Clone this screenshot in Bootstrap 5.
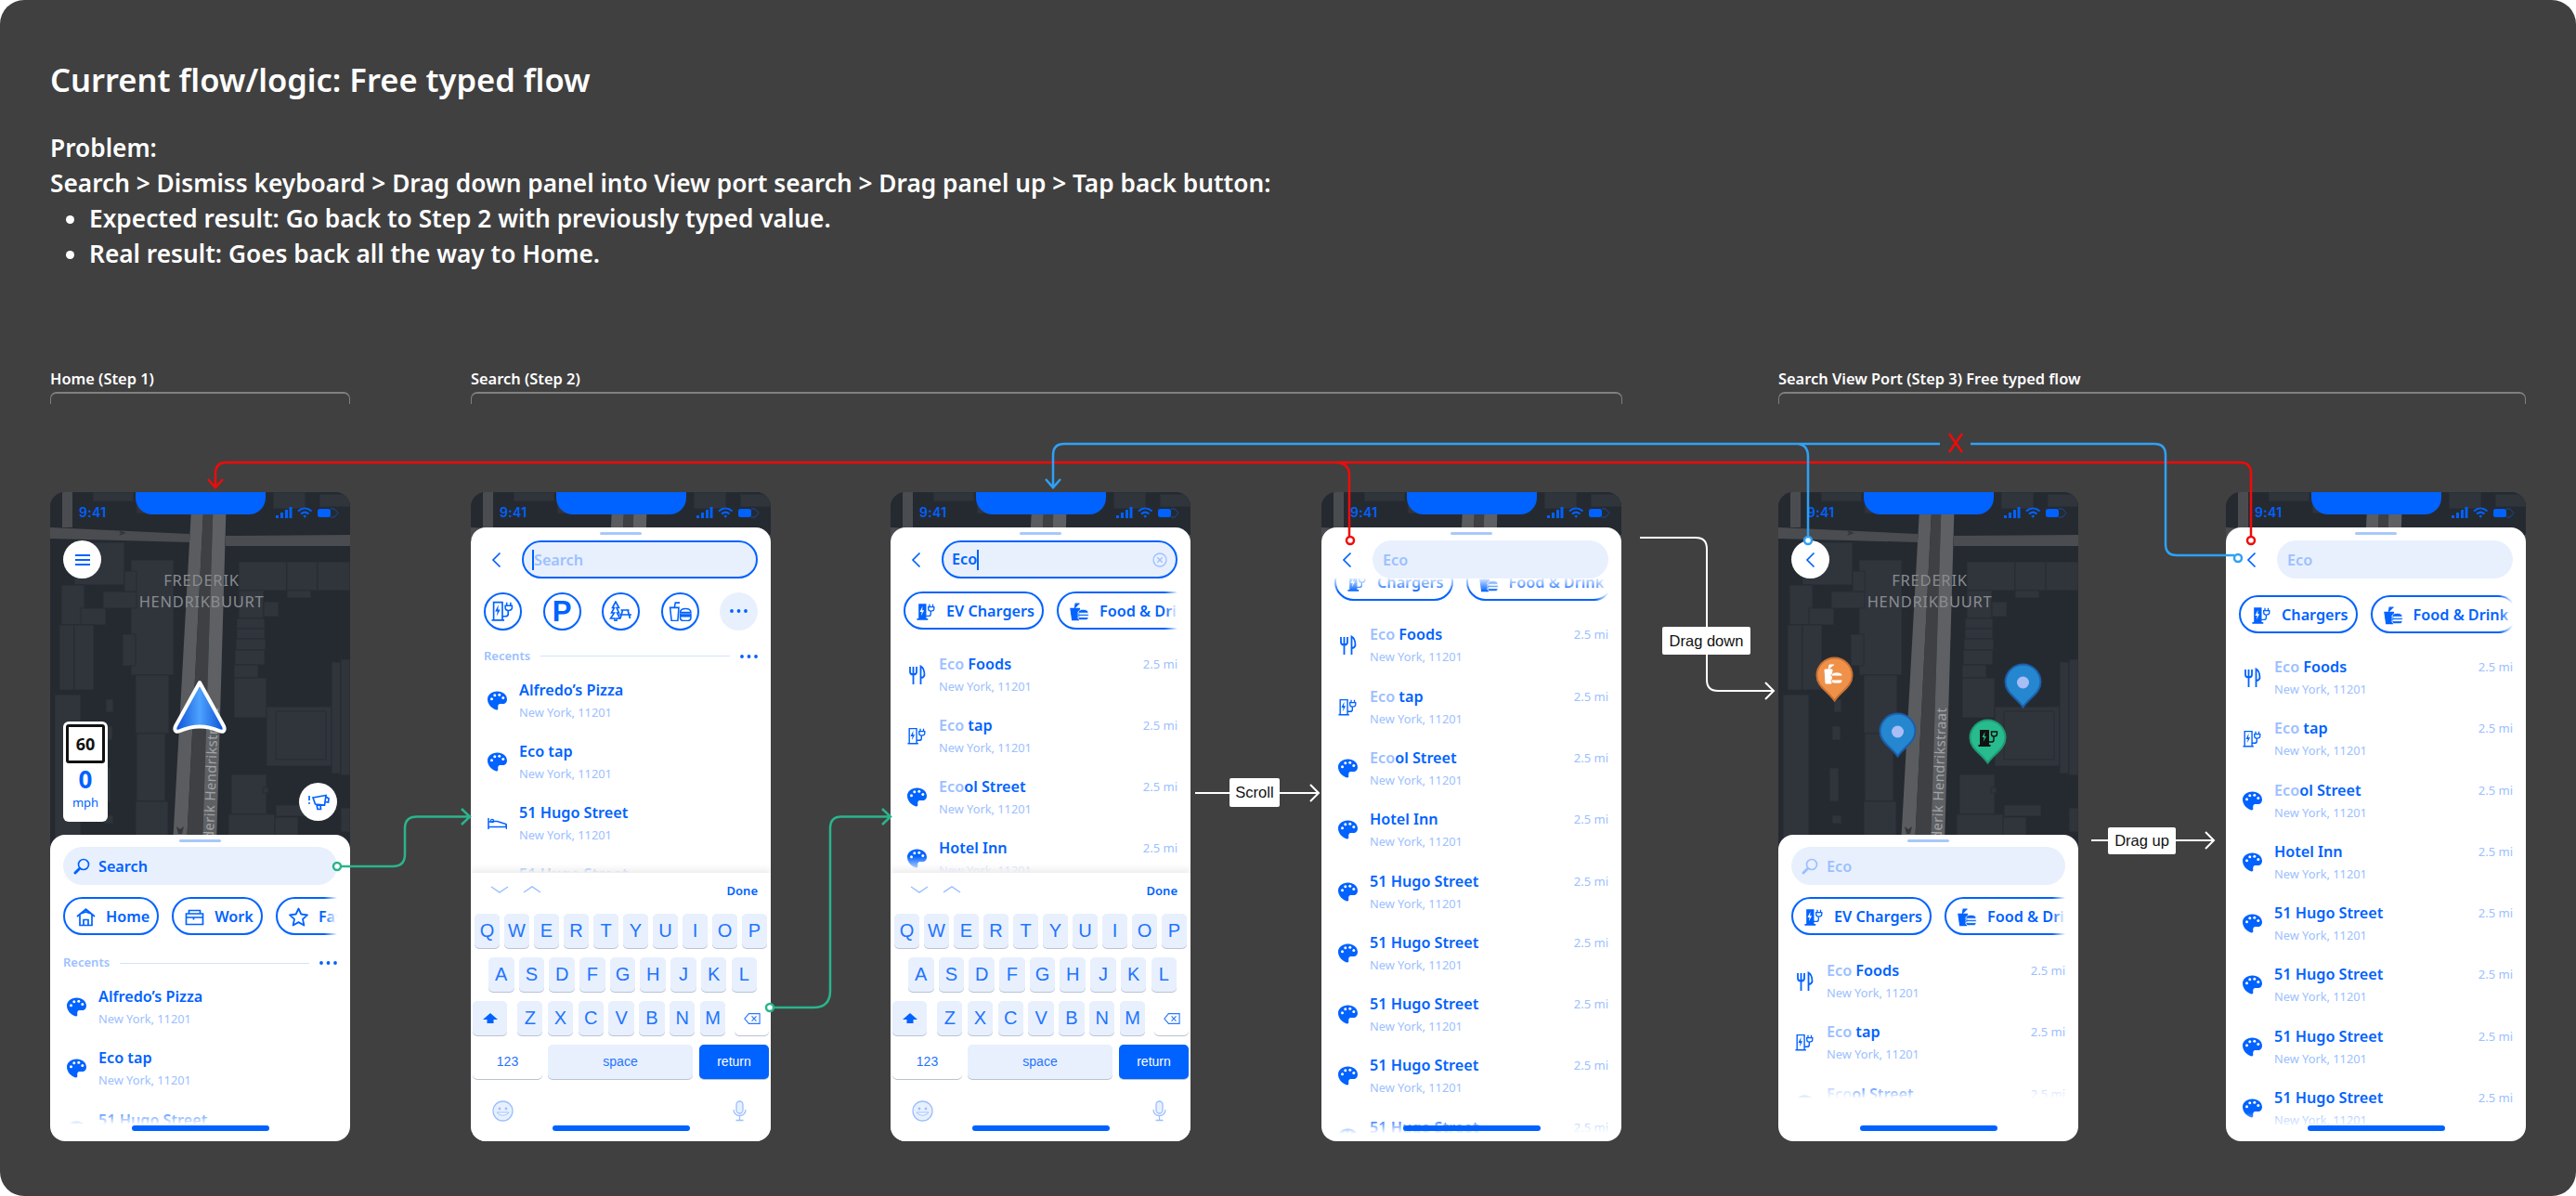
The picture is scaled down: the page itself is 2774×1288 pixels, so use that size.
<!doctype html>
<html lang="en">
<head>
<meta charset="utf-8">
<title>Free typed flow</title>
<link rel="stylesheet" href="https://cdn.jsdelivr.net/npm/bootstrap@5.3.0/dist/css/bootstrap.min.css">
<style>
html,body{margin:0;background:#fff}
.pg{width:2774px;height:1288px;background:#404040;border-radius:26px;position:relative;overflow:hidden;padding:64px 0 0 54px;font-family:"Noto Sans","Open Sans",sans-serif;color:#fff}
.ttl{font-size:34.500px;font-weight:600;line-height:44px;margin:0 0 32px}
.prob{font-size:26.250px;font-weight:600;line-height:38px}
.prob ul{margin:0;padding-left:42px}
.brks{margin-top:106px}
.brk-l{font-size:16.400px;font-weight:600;line-height:20px;margin-bottom:4px}
.brk-b{height:13px;border:solid #808080;border-width:2px 1px 0;border-radius:7px 7px 0 0}
.b1{width:323px}.b2{width:1240px;margin-left:130px}.b3{width:805px;margin-left:168px}
.phs{margin-top:95px}
.ph{width:323px;height:699px;border-radius:16px;overflow:hidden;position:relative;flex:none;background:#252a31}
.m2{margin-left:130px}.m3{margin-left:129px}.m4{margin-left:141px}.m5{margin-left:169px}.m6{margin-left:159px}
.mp{position:absolute;left:0;top:0;width:323px;height:380px}
.ntc{position:absolute;left:92px;top:0;width:140px;height:24px;background:#0062ff;border-radius:0 0 18px 18px}
.tm{position:absolute;left:31px;top:13px;font:600 14px/18px Inter,sans-serif;color:#0062ff;letter-spacing:.3px}
.stt{position:absolute;left:242px;top:15px;width:70px;height:14px}
.rnd{position:absolute;width:41px;height:41px;border-radius:50%;background:#fff}
.r-tl{left:14px;top:52px}.r-rp{left:268px;top:313px}
.r-tl .cb{width:11px;height:18px}
.spd{position:absolute;left:14px;top:247px;width:48px;height:108px;border-radius:6px;background:#fff;text-align:center;color:#0062ff}
.sgn{margin:3px;height:42px;border:3px solid #111;border-radius:3px;font:700 18px/36px "Noto Sans",sans-serif;color:#111}
.spv{font:700 26px/30px "Noto Sans",sans-serif;margin-top:-1px}
.spu{font:400 13px/16px "Noto Sans",sans-serif;margin-top:2px}
.nav-a{position:absolute;left:131px;top:201px;width:60px;height:62px}
.pin{position:absolute;width:41px;height:49px}
.p1{left:40px;top:177px}.p2{left:108px;top:237px}.p3{left:243px;top:184px}.p4{left:205px;top:244px}
.pn{background:#fff;border-radius:16px 16px 0 0;position:relative;padding:0 14px;color:#0062ff;flex:none}
.pn>*{flex-shrink:0}
.lo{height:330px}.hi{height:661px}
.hd{width:45px;height:3px;border-radius:2px;background:#a8c8fb;margin:5px auto 5px}
.hi .hd{margin-bottom:6px}
.srch{height:41px;border-radius:21px;background:#e8f0fe;font-size:16.200px;font-weight:600;line-height:43px;padding:0 11px;white-space:nowrap}
.srch.on{border:2px solid #0062ff;line-height:39px;padding:0 9px}
.srch svg{width:18px;height:18px;margin-right:9px;vertical-align:-3px}
.bk{width:41px;height:41px;flex:none}
.bk svg{width:11px;height:18px;margin-left:8px}
.lt{color:#9cc0ff}
.crt{display:inline-block;width:2px;height:22px;background:#0062ff;vertical-align:-5px}
.crt.mid{vertical-align:0}
.srch .clr{width:16px;height:16px;margin:0 0 0 auto}
.chps{height:41px;gap:14px;overflow:hidden;position:relative;margin-top:13px}
.chps::after{content:"";position:absolute;right:0;top:0;bottom:0;width:14px;background:linear-gradient(90deg,rgba(255,255,255,0),#fff)}
.chp{height:41px;border:2px solid #0062ff;border-radius:21px;padding:0 8px 0 12px;flex:none;font-size:16.200px;font-weight:600;line-height:39px;white-space:nowrap;box-shadow:0 0 3px rgba(0,60,160,.12)}
.chp svg{width:21px;height:21px;margin-right:11px;vertical-align:-5px}
.hi .chps{margin-top:14px}
.chclip{height:24px;overflow:hidden;position:relative}
.chclip::before{content:"";position:absolute;left:0;right:0;top:0;height:14px;background:linear-gradient(rgba(255,255,255,.85),rgba(255,255,255,0));z-index:2}
.hi .chclip .chps{margin-top:-17px}
.hi .chps.low{margin-top:18px}
.cc{width:41px;height:41px;border-radius:50%;border:2px solid #0062ff;flex:none;box-shadow:0 0 3px rgba(0,60,160,.12)}
.cc svg{width:25px;height:22px}
.cc.fl{background:#e8f0fe;border:0;box-shadow:none}
.cc.fl svg{width:19px;height:4px}
.pp{font:700 31px/1 "Liberation Sans",sans-serif}
.cg{gap:22.5px;margin-top:14.5px}
.rec{height:24px;margin-top:16px;gap:11px;font-size:13px;font-weight:600}
.lo .rec{margin-top:18px}
.rec i{height:1px;background:#d3e2fc;flex:1}
.dts{width:19px;height:4px;flex:none}
.lst{overflow:hidden;position:relative;min-height:0}
.pn>.lst.flex-grow-1{flex-basis:0;flex-shrink:1}
.lst::after{content:"";position:absolute;left:0;right:0;bottom:0;height:18px;background:linear-gradient(rgba(255,255,255,0),#fff)}
.la{margin-top:12px;height:150px}
.lb{margin-top:12px}
.lc{margin-top:24.500px}
.ld{margin-top:24.400px}
.le{margin-top:26px;height:150px}
.lf{margin-top:24px;margin-bottom:13px}
.rw{height:66.3px}
.ric{width:38px;flex:none}
.ric svg{width:21px;height:21px;display:block;margin:13px 0 0 3.5px}
.rt{font-size:16.200px;font-weight:600;line-height:24px;white-space:nowrap}
.rs{font-size:12.800px;line-height:24px;color:#9cc0ff;white-space:nowrap}
.rd{font-size:13px;line-height:24px;color:#9cc0ff;margin-left:auto;white-space:nowrap}
.kb{height:289px;margin:0 -14px;background:#fff;box-shadow:0 -3px 8px rgba(0,0,0,.09);position:relative;flex:none;font-family:"Liberation Sans",sans-serif}
.kt{height:43.6px;padding:0 14px 0 21px;font:600 13px/38px "Noto Sans",sans-serif}
.kt svg{width:20px;height:10px;margin:13px 15px 0 0}
.kr{height:37.5px;margin-bottom:9.5px;gap:5px}
.ky{width:27px;height:37.5px;border-radius:5px;background:#e8f0fe;box-shadow:0 1px 0 #b8c3d4;font-size:20px;line-height:36px;text-align:center;color:#1f74ff;flex:none}
.kr2{padding-left:19px;gap:5.2px}.kr2 .ky{width:27.5px}
.kr3{padding-left:2px;gap:5.3px}.kr3 .ky{width:27.5px}
.ky.ws{background:#fff}
.kr3 .ky.sh{width:37px;margin-right:5.7px}.kr3 .ky.bs{width:37px;margin-left:4.7px}
.ky svg{width:18px;height:16px}
.kr4{padding-left:2px;gap:6px}
.kr4 .ky{font-size:14px}
.ky.k1{width:75px}.ky.k2{width:156px}.ky.k3{width:75px;background:#0062ff;color:#fff;margin-left:1px}
.kb-b{padding:13px 22.5px 0}
.kb-b svg{width:23px;height:23px}
.hb{position:absolute;left:88px;bottom:11px;width:148px;height:6px;border-radius:3px;background:#0062ff;z-index:3}
.ov{position:absolute;left:0;top:0;width:2774px;height:1288px;pointer-events:none}
.tg{position:absolute;background:#fff;color:#111;border-radius:2px;font:400 16.500px/1 "Liberation Sans",sans-serif;display:flex;align-items:center;justify-content:center}
.t1{left:1324px;top:838px;width:54px;height:31px}
.t2{left:1790px;top:675px;width:95px;height:30px}
.t3{left:2270px;top:891px;width:73px;height:29px}
.defs{position:absolute;width:0;height:0}
</style>
</head>
<body>
<svg class="defs" aria-hidden="true">
<defs>
<linearGradient id="nv" x1="0" x2="1" y1="0" y2="0"><stop offset="0" stop-color="#0a4fd6"/><stop offset=".5" stop-color="#4ea2ff"/><stop offset="1" stop-color="#0a4fd6"/></linearGradient>
<symbol id="map" viewBox="0 0 323 380">
<rect width="323" height="380" fill="#252a31"/>
<g fill="#30353c" stroke="#272c33" stroke-width=".8">
<rect x="46" y="0" width="44" height="10"/><rect x="93" y="3" width="45" height="20"/><rect x="26" y="54" width="54" height="46"/>
<rect x="87" y="73" width="46" height="124"/><rect x="92" y="197" width="36" height="63"/><rect x="93" y="260" width="31" height="73"/><rect x="92" y="333" width="35" height="40"/>
<rect x="12" y="100" width="25" height="43"/><rect x="33" y="125" width="27" height="18"/><rect x="57" y="107" width="36" height="18"/><rect x="80" y="85" width="13" height="22"/>
<rect x="10" y="143" width="16" height="70"/><rect x="26" y="143" width="21" height="70"/><rect x="5" y="218" width="28" height="155"/>
<rect x="78" y="153" width="14" height="34"/><rect x="60" y="223" width="8" height="14"/><rect x="58" y="252" width="9" height="15"/><rect x="55" y="297" width="10" height="36"/><rect x="58" y="348" width="10" height="9"/>
<rect x="203" y="75" width="52" height="31"/><rect x="255" y="75" width="33" height="31"/><rect x="288" y="75" width="35" height="31"/><rect x="240" y="0" width="35" height="18"/><rect x="290" y="2" width="33" height="14"/>
<rect x="203" y="106" width="27" height="30"/><rect x="201" y="136" width="30" height="11"/><rect x="201" y="147" width="30" height="11"/><rect x="200" y="158" width="32" height="12"/><rect x="199" y="170" width="32" height="16"/><rect x="198" y="186" width="26" height="14"/><rect x="198" y="200" width="35" height="43"/><rect x="230" y="118" width="16" height="16"/><rect x="255" y="106" width="26" height="8"/>
<rect x="233" y="231" width="70" height="64"/><rect x="243" y="236" width="54" height="52"/><rect x="303" y="183" width="10" height="120"/><rect x="313" y="180" width="10" height="125"/>
<rect x="195" y="304" width="38" height="43"/><rect x="192" y="347" width="50" height="30"/><rect x="242" y="350" width="25" height="27"/><rect x="243" y="337" width="40" height="12"/><rect x="313" y="340" width="10" height="26"/><rect x="229" y="318" width="6" height="6"/>
</g>
<path d="M0 38 150 45v9L0 50zM189 47 323 46v12H189zM13 0h11v38H13z" fill="#4a4c50"/>
<path d="M153 0h13l-19 380h-15z" fill="#5a5c5f"/><path d="M166 0h10l-12 380h-17z" fill="#3e4043"/><path d="M176 0h14l-11 380h-15z" fill="#5e6063"/>
<path d="M74 41l8 3-8 3 2-3z" fill="#33373b"/><path d="M136 360l4 3 4-3-2 8h-4z" fill="#33373b"/>
<g fill="#8a8c90" text-anchor="middle" font-family="Noto Sans,sans-serif">
<text x="163" y="101" font-size="16.5" letter-spacing=".8">FREDERIK</text>
<text x="163" y="124" font-size="16.5" letter-spacing=".7">HENDRIKBUURT</text>
<text transform="translate(181 232) rotate(-88)" text-anchor="end" font-size="15" letter-spacing=".3" fill="#a0a2a5">Frederik Hendrikstraat</text>
</g>
</symbol>
<symbol id="st" viewBox="0 0 70 14">
<path d="M1 10h3v3H1zM6 7h3v6H6zM11 4h3v9h-3zM15.500 1h3v12h-3z" fill="#0062ff"/>
<path d="M25 5.500c4.500-4 10-4 14.500 0M28 8.500c2.700-2.400 5.800-2.400 8.500 0" fill="none" stroke="#0062ff" stroke-width="2"/><path d="M30.500 10.500c1-1 2.500-1 3.500 0L32.200 13z" fill="#0062ff"/>
<rect x="46" y="3" width="14" height="9" rx="2.500" fill="#0062ff"/><path d="M60 3h4l4 4.500-4 4.500h-4" fill="none" stroke="#174a9a"/>
</symbol>
<symbol id="pal" viewBox="0 0 21 20"><path d="M10.500 0C4.600 0 0 3.600 0 8.600 0 14 4.200 18.500 9.500 20c1.500.2 2-.9 1.800-1.900-.3-1.600-.1-4 1.700-4.500 1.600-.4 3.300.2 4.800-.2 2-.5 3.200-2.400 3.200-4.600C21 3.800 16.500 0 10.500 0z" fill="#0062ff"/><g fill="#fff"><circle cx="4.500" cy="8.200" r="1.500"/><circle cx="7.800" cy="4.300" r="1.500"/><circle cx="12.800" cy="3.800" r="1.500"/><circle cx="16.800" cy="7" r="1.500"/></g></symbol>
<symbol id="fk" viewBox="0 0 21 21"><path d="M3 2v5.500C3 9.500 4.500 10.500 6.500 10.500S10 9.500 10 7.500V2M6.500 2v19M14.500 21V1.500c3 1.500 4 6 4 9.500-.5 2-2 3-4 3" fill="none" stroke="#0062ff" stroke-width="1.800"/></symbol>
<symbol id="ev" viewBox="0 0 24 21"><path d="M2.500 19.500V1.500h9v18M.5 20h13M11.500 16h3c1.800 0 3-.8 3-2.500V10" fill="none" stroke="#0062ff" stroke-width="1.600"/><path d="M7.500 4 4 11h2.500L5.500 16l3.800-7H7z" fill="#0062ff"/><path d="M17.500 10c-2 0-3-1-3-3V5h7v2c0 2-1 3-4 3M16 5V1.500M20 5V1.500" fill="none" stroke="#0062ff" stroke-width="1.500"/></symbol>
<symbol id="evf" viewBox="0 0 24 21"><path d="M2.500 1h9.500v18.500H2.500zM.5 19h13.500v2H.5z" fill="#0062ff"/><path d="M7.500 4 4 11h2.500L5.500 16l3.800-7H7z" fill="#fff"/><path d="M11.500 16h3c1.800 0 3-.8 3-2.500V10M17.500 10c-2 0-3-1-3-3V5h7v2c0 2-1 3-4 3M16 5V1.500M20 5V1.500" fill="none" stroke="#0062ff" stroke-width="1.500"/></symbol>
<symbol id="fd" viewBox="0 0 24 21"><path d="M1 7h11l-1 14H3zM6 7l1-6h5" fill="#0062ff" stroke="#0062ff" stroke-width="1.300"/><path d="M10 12.500c0-3 3-4.500 6.500-4.500S23 9.500 23 12.500zM10 17.500h13c0 2-1.500 3.500-3.500 3.500h-6c-2 0-3.500-1.500-3.500-3.500z" fill="#0062ff" stroke="#fff" stroke-width="1"/><path d="M10 14h13v2H10z" fill="#0062ff" stroke="#fff" stroke-width=".6"/></symbol>
<symbol id="fdo" viewBox="0 0 24 21"><path d="M1.500 7h9l-1 13.500H3zM6 7l1-5h4.500" fill="none" stroke="#0062ff" stroke-width="1.500"/><path d="M12 12c0-2.500 2-4 5.500-4S23 9.500 23 12zM12 16h11v1.500c0 2-1 3-3 3h-5c-2 0-3-1-3-3zM12 13.500h11v1.500H12z" fill="none" stroke="#0062ff" stroke-width="1.400"/></symbol>
<symbol id="tr" viewBox="0 0 25 22"><path d="M7 1 3.500 7.500h2L2.500 13h3L1.500 19H6v3h2v-3h3.500l-3-6h2L8 7.500h2.500z" fill="none" stroke="#0062ff" stroke-width="1.600"/><path d="M12.500 10h9M10.500 15h13.500M14.500 10l-2.500 9M20 10l2.500 9" fill="none" stroke="#0062ff" stroke-width="1.700"/></symbol>
<symbol id="hm" viewBox="0 0 21 21"><path d="M1 10 10.500 2 20 10M4 8v11.500h13V8M8 19.500v-6h5v6M3.500 7.500 10.500 5 17.500 7.500" fill="none" stroke="#0062ff" stroke-width="1.700"/></symbol>
<symbol id="wk" viewBox="0 0 21 21"><path d="M1.500 7h18v11.500h-18zM4.500 7V3.500h12V7M1.500 11h8v2.500M9.500 11h10" fill="none" stroke="#0062ff" stroke-width="1.700"/></symbol>
<symbol id="sr" viewBox="0 0 21 21"><path d="M10.500 1.500 13.300 7.500 20 8.300l-5 4.600 1.400 6.600-5.900-3.400-5.900 3.400L6 12.900 1 8.300l6.700-.8z" fill="none" stroke="#0062ff" stroke-width="1.800" stroke-linejoin="round"/></symbol>
<symbol id="mg" viewBox="0 0 18 18"><circle cx="11" cy="7" r="5.500" fill="none" stroke="currentColor" stroke-width="1.700"/><path d="M6.500 11.500 2 16" stroke="currentColor" stroke-width="3" stroke-linecap="round"/></symbol>
<symbol id="bd" viewBox="0 0 21 21"><path d="M1 5v12M1 14.500h19.500M20.500 12v5M1 14V9h5v-.5h4.500L20 11.500v3" fill="none" stroke="#0062ff" stroke-width="1.500"/><circle cx="5" cy="8" r="1.600" fill="none" stroke="#0062ff" stroke-width="1.300"/></symbol>
<symbol id="bk" viewBox="0 0 11 18"><path d="M9.500 1.500 2 9l7.500 7.500" fill="none" stroke="#0062ff" stroke-width="1.700"/></symbol>
<symbol id="dt" viewBox="0 0 19 4"><circle cx="2" cy="2" r="1.900" fill="#0062ff"/><circle cx="9.500" cy="2" r="1.900" fill="#0062ff"/><circle cx="17" cy="2" r="1.900" fill="#0062ff"/></symbol>
<symbol id="cv" viewBox="0 0 20 10"><path d="M1 2 10 8l9-6" fill="none" stroke="#9cc0ff" stroke-width="1.500"/></symbol>
<symbol id="cu" viewBox="0 0 20 10"><path d="M1 8 10 2l9 6" fill="none" stroke="#9cc0ff" stroke-width="1.500"/></symbol>
<symbol id="si" viewBox="0 0 18 16"><path d="M9 2 1 9h4.500v4h7V9H17z" fill="#0062ff"/></symbol>
<symbol id="bs" viewBox="0 0 20 16"><path d="M6 2h13v12H6L1 8z M9.500 5l5.500 6M15 5l-5.500 6" fill="none" stroke="#2a78ff" stroke-width="1.300"/></symbol>
<symbol id="em" viewBox="0 0 23 23"><circle cx="11.500" cy="11.500" r="10.500" fill="#e8f0fe" stroke="#9cc0ff" stroke-width="1.300"/><circle cx="8" cy="9" r="1.400" fill="#9cc0ff"/><circle cx="15" cy="9" r="1.400" fill="#9cc0ff"/><path d="M5 13c3 4 10 4 13 0z" fill="#fff" stroke="#9cc0ff"/></symbol>
<symbol id="mc" viewBox="0 0 23 23"><rect x="8" y="1" width="7" height="13" rx="3.500" fill="#e8f0fe" stroke="#9cc0ff" stroke-width="1.300"/><path d="M5 10c0 4 3 6.500 6.500 6.500S18 14 18 10M11.500 16.500V21M7.500 21.500h8" fill="none" stroke="#9cc0ff" stroke-width="1.300"/></symbol>
<symbol id="pb" viewBox="0 0 41 49"><path d="M20.500 1.500C30.500 1.500 39.500 9.500 39.500 20.500 39.500 32 28 37 20.500 47.500 13 37 1.500 32 1.500 20.500 1.500 9.500 10.500 1.500 20.500 1.500z" fill="#2487d0" stroke="#1c5ea8" stroke-width="2"/><circle cx="20.500" cy="21" r="6.500" fill="#a9bdf6"/></symbol>
</defs>
</svg>

<main class="pg">
<h1 class="ttl">Current flow/logic: Free typed flow</h1>
<div class="prob">
<div>Problem:</div>
<div>Search &gt; Dismiss keyboard &gt; Drag down panel into View port search &gt; Drag panel up &gt; Tap back button:</div>
<ul>
<li>Expected result: Go back to Step 2 with previously typed value.</li>
<li>Real result: Goes back all the way to Home.</li>
</ul>
</div>

<div class="brks d-flex">
<div class="b1"><div class="brk-l">Home (Step 1)</div><div class="brk-b"></div></div>
<div class="b2"><div class="brk-l">Search (Step 2)</div><div class="brk-b"></div></div>
<div class="b3"><div class="brk-l">Search View Port (Step 3) Free typed flow</div><div class="brk-b"></div></div>
</div>

<div class="phs d-flex">

<!-- Phone 1 -->
<section class="ph d-flex flex-column justify-content-end">
<svg class="mp"><use href="#map"/></svg>
<div class="ntc"></div><div class="tm">9:41</div><svg class="stt"><use href="#st"/></svg>
<div class="rnd r-tl d-flex align-items-center justify-content-center"><svg width="18" height="12"><path d="M1 1h16M1 6h16M1 11h16" stroke="#0062ff" stroke-width="1.800"/></svg></div>
<div class="spd"><div class="sgn">60</div><div class="spv">0</div><div class="spu">mph</div></div>
<svg class="nav-a" viewBox="0 0 60 62"><path d="M30 4 56 51c2 5-1 7-5 5-14-6-28-6-42 0-4 2-7 0-5-5z" fill="url(#nv)" stroke="#fff" stroke-width="4" stroke-linejoin="round"/></svg>
<div class="rnd r-rp d-flex align-items-center justify-content-center"><svg width="24" height="20" viewBox="0 0 24 20"><path d="M6 5 20 2.500 18.500 13 8.500 12zM20 4l3 2-.5 4-3-.5M10 12.500l1 5h3.500l-.5-4.500M2 3v5" fill="none" stroke="#0062ff" stroke-width="1.700"/><circle cx="2" cy="11" r="1" fill="#0062ff"/></svg></div>
<div class="pn lo d-flex flex-column">
<div class="hd"></div>
<div class="srch"><svg><use href="#mg"/></svg>Search</div>
<div class="chps d-flex">
<div class="chp"><svg><use href="#hm"/></svg>Home</div>
<div class="chp"><svg><use href="#wk"/></svg>Work</div>
<div class="chp"><svg><use href="#sr"/></svg>Favorites</div>
</div>
<div class="rec d-flex align-items-center"><span class="lt">Recents</span><i></i><svg class="dts"><use href="#dt"/></svg></div>
<div class="lst la">
<div class="rw d-flex"><div class="ric"><svg><use href="#pal"/></svg></div><div><div class="rt">Alfredo’s Pizza</div><div class="rs">New York, 11201</div></div></div>
<div class="rw d-flex"><div class="ric"><svg><use href="#pal"/></svg></div><div><div class="rt">Eco tap</div><div class="rs">New York, 11201</div></div></div>
<div class="rw d-flex"><div class="ric"><svg><use href="#pal"/></svg></div><div><div class="rt">51 Hugo Street</div><div class="rs">New York, 11201</div></div></div>
</div>
</div>
<div class="hb"></div>
</section>

<!-- Phone 2 -->
<section class="ph m2 d-flex flex-column justify-content-end">
<svg class="mp"><use href="#map"/></svg>
<div class="ntc"></div><div class="tm">9:41</div><svg class="stt"><use href="#st"/></svg>
<div class="pn hi d-flex flex-column">
<div class="hd"></div>
<div class="d-flex"><div class="bk d-flex align-items-center"><svg><use href="#bk"/></svg></div><div class="srch on flex-grow-1 lt"><span class="crt"></span>Search</div></div>
<div class="d-flex cg">
<div class="cc d-flex align-items-center justify-content-center"><svg><use href="#ev"/></svg></div>
<div class="cc d-flex align-items-center justify-content-center pp">P</div>
<div class="cc d-flex align-items-center justify-content-center"><svg><use href="#tr"/></svg></div>
<div class="cc d-flex align-items-center justify-content-center"><svg><use href="#fdo"/></svg></div>
<div class="cc fl d-flex align-items-center justify-content-center"><svg><use href="#dt"/></svg></div>
</div>
<div class="rec d-flex align-items-center"><span class="lt">Recents</span><i></i><svg class="dts"><use href="#dt"/></svg></div>
<div class="lst flex-grow-1 lb">
<div class="rw d-flex"><div class="ric"><svg><use href="#pal"/></svg></div><div><div class="rt">Alfredo’s Pizza</div><div class="rs">New York, 11201</div></div></div>
<div class="rw d-flex"><div class="ric"><svg><use href="#pal"/></svg></div><div><div class="rt">Eco tap</div><div class="rs">New York, 11201</div></div></div>
<div class="rw d-flex"><div class="ric"><svg><use href="#bd"/></svg></div><div><div class="rt">51 Hugo Street</div><div class="rs">New York, 11201</div></div></div>
<div class="rw d-flex"><div class="ric"><svg><use href="#pal"/></svg></div><div><div class="rt">51 Hugo Street</div><div class="rs">New York, 11201</div></div></div>
</div>
<div class="kb">
<div class="kt d-flex"><svg><use href="#cv"/></svg><svg><use href="#cu"/></svg><span class="ms-auto">Done</span></div>
<div class="kr d-flex ps-1"><div class="ky">Q</div><div class="ky">W</div><div class="ky">E</div><div class="ky">R</div><div class="ky">T</div><div class="ky">Y</div><div class="ky">U</div><div class="ky">I</div><div class="ky">O</div><div class="ky">P</div></div>
<div class="kr kr2 d-flex"><div class="ky">A</div><div class="ky">S</div><div class="ky">D</div><div class="ky">F</div><div class="ky">G</div><div class="ky">H</div><div class="ky">J</div><div class="ky">K</div><div class="ky">L</div></div>
<div class="kr kr3 d-flex"><div class="ky sh"><svg><use href="#si"/></svg></div><div class="ky">Z</div><div class="ky">X</div><div class="ky">C</div><div class="ky">V</div><div class="ky">B</div><div class="ky">N</div><div class="ky">M</div><div class="ky bs ws"><svg><use href="#bs"/></svg></div></div>
<div class="kr kr4 d-flex"><div class="ky k1 ws">123</div><div class="ky k2">space</div><div class="ky k3">return</div></div>
<div class="kb-b d-flex justify-content-between"><svg><use href="#em"/></svg><svg><use href="#mc"/></svg></div>
</div>
</div>
<div class="hb"></div>
</section>

<!-- Phone 3 -->
<section class="ph m3 d-flex flex-column justify-content-end">
<svg class="mp"><use href="#map"/></svg>
<div class="ntc"></div><div class="tm">9:41</div><svg class="stt"><use href="#st"/></svg>
<div class="pn hi d-flex flex-column">
<div class="hd"></div>
<div class="d-flex"><div class="bk d-flex align-items-center"><svg><use href="#bk"/></svg></div><div class="srch on flex-grow-1 d-flex align-items-center">Eco<span class="crt mid"></span><svg class="clr" viewBox="0 0 16 16"><circle cx="8" cy="8" r="7" fill="none" stroke="#9cc0ff" stroke-width="1.300"/><path d="M5.300 5.300l5.400 5.400M10.700 5.300l-5.400 5.400" stroke="#9cc0ff" stroke-width="1.300"/></svg></div></div>
<div class="chps d-flex">
<div class="chp"><svg><use href="#evf"/></svg>EV Chargers</div>
<div class="chp"><svg><use href="#fd"/></svg>Food &amp; Drink</div>
</div>
<div class="lst flex-grow-1 lc">
<div class="rw d-flex"><div class="ric"><svg><use href="#fk"/></svg></div><div><div class="rt"><span class="lt">Eco</span> Foods</div><div class="rs">New York, 11201</div></div><div class="rd">2.5 mi</div></div>
<div class="rw d-flex"><div class="ric"><svg><use href="#ev"/></svg></div><div><div class="rt"><span class="lt">Eco</span> tap</div><div class="rs">New York, 11201</div></div><div class="rd">2.5 mi</div></div>
<div class="rw d-flex"><div class="ric"><svg><use href="#pal"/></svg></div><div><div class="rt"><span class="lt">Eco</span>ol Street</div><div class="rs">New York, 11201</div></div><div class="rd">2.5 mi</div></div>
<div class="rw d-flex"><div class="ric"><svg><use href="#pal"/></svg></div><div><div class="rt">Hotel Inn</div><div class="rs">New York, 11201</div></div><div class="rd">2.5 mi</div></div>
</div>
<div class="kb">
<div class="kt d-flex"><svg><use href="#cv"/></svg><svg><use href="#cu"/></svg><span class="ms-auto">Done</span></div>
<div class="kr d-flex ps-1"><div class="ky">Q</div><div class="ky">W</div><div class="ky">E</div><div class="ky">R</div><div class="ky">T</div><div class="ky">Y</div><div class="ky">U</div><div class="ky">I</div><div class="ky">O</div><div class="ky">P</div></div>
<div class="kr kr2 d-flex"><div class="ky">A</div><div class="ky">S</div><div class="ky">D</div><div class="ky">F</div><div class="ky">G</div><div class="ky">H</div><div class="ky">J</div><div class="ky">K</div><div class="ky">L</div></div>
<div class="kr kr3 d-flex"><div class="ky sh"><svg><use href="#si"/></svg></div><div class="ky">Z</div><div class="ky">X</div><div class="ky">C</div><div class="ky">V</div><div class="ky">B</div><div class="ky">N</div><div class="ky">M</div><div class="ky bs ws"><svg><use href="#bs"/></svg></div></div>
<div class="kr kr4 d-flex"><div class="ky k1 ws">123</div><div class="ky k2">space</div><div class="ky k3">return</div></div>
<div class="kb-b d-flex justify-content-between"><svg><use href="#em"/></svg><svg><use href="#mc"/></svg></div>
</div>
</div>
<div class="hb"></div>
</section>

<!-- Phone 4 -->
<section class="ph m4 d-flex flex-column justify-content-end">
<svg class="mp"><use href="#map"/></svg>
<div class="ntc"></div><div class="tm">9:41</div><svg class="stt"><use href="#st"/></svg>
<div class="pn hi d-flex flex-column">
<div class="hd"></div>
<div class="d-flex"><div class="bk d-flex align-items-center"><svg><use href="#bk"/></svg></div><div class="srch flex-grow-1 lt">Eco</div></div>
<div class="chclip"><div class="chps d-flex">
<div class="chp"><svg><use href="#evf"/></svg>Chargers</div>
<div class="chp"><svg><use href="#fd"/></svg>Food &amp; Drink</div>
</div></div>
<div class="lst flex-grow-1 mb-2 ld">
<div class="rw d-flex"><div class="ric"><svg><use href="#fk"/></svg></div><div><div class="rt"><span class="lt">Eco</span> Foods</div><div class="rs">New York, 11201</div></div><div class="rd">2.5 mi</div></div>
<div class="rw d-flex"><div class="ric"><svg><use href="#ev"/></svg></div><div><div class="rt"><span class="lt">Eco</span> tap</div><div class="rs">New York, 11201</div></div><div class="rd">2.5 mi</div></div>
<div class="rw d-flex"><div class="ric"><svg><use href="#pal"/></svg></div><div><div class="rt"><span class="lt">Eco</span>ol Street</div><div class="rs">New York, 11201</div></div><div class="rd">2.5 mi</div></div>
<div class="rw d-flex"><div class="ric"><svg><use href="#pal"/></svg></div><div><div class="rt">Hotel Inn</div><div class="rs">New York, 11201</div></div><div class="rd">2.5 mi</div></div>
<div class="rw d-flex"><div class="ric"><svg><use href="#pal"/></svg></div><div><div class="rt">51 Hugo Street</div><div class="rs">New York, 11201</div></div><div class="rd">2.5 mi</div></div>
<div class="rw d-flex"><div class="ric"><svg><use href="#pal"/></svg></div><div><div class="rt">51 Hugo Street</div><div class="rs">New York, 11201</div></div><div class="rd">2.5 mi</div></div>
<div class="rw d-flex"><div class="ric"><svg><use href="#pal"/></svg></div><div><div class="rt">51 Hugo Street</div><div class="rs">New York, 11201</div></div><div class="rd">2.5 mi</div></div>
<div class="rw d-flex"><div class="ric"><svg><use href="#pal"/></svg></div><div><div class="rt">51 Hugo Street</div><div class="rs">New York, 11201</div></div><div class="rd">2.5 mi</div></div>
<div class="rw d-flex"><div class="ric"><svg><use href="#pal"/></svg></div><div><div class="rt">51 Hugo Street</div><div class="rs">New York, 11201</div></div><div class="rd">2.5 mi</div></div>
</div>
</div>
<div class="hb"></div>
</section>

<!-- Phone 5 -->
<section class="ph m5 d-flex flex-column justify-content-end">
<svg class="mp"><use href="#map"/></svg>
<div class="ntc"></div><div class="tm">9:41</div><svg class="stt"><use href="#st"/></svg>
<div class="rnd r-tl d-flex align-items-center justify-content-center"><svg class="cb"><use href="#bk"/></svg></div>
<svg class="pin p1" viewBox="0 0 41 49"><path d="M20.500 1.500C30.500 1.500 39.500 9.500 39.500 20.500 39.500 32 28 37 20.500 47.500 13 37 1.500 32 1.500 20.500 1.500 9.500 10.500 1.500 20.500 1.500z" fill="#f0914a" stroke="#c97232" stroke-width="2"/><path d="M10 14h8l-1 15h-6zM14 14l1-5h5" fill="#fff" stroke="#fff"/><path d="M17 21c0-3 3-4 6-4s6 1 6 4zM17 25h12c0 3-2 4-4 4h-4c-2 0-4-1-4-4z" fill="#fff" stroke="#f0914a" stroke-width=".8"/></svg>
<svg class="pin p2"><use href="#pb"/></svg>
<svg class="pin p3"><use href="#pb"/></svg>
<svg class="pin p4" viewBox="0 0 41 49"><path d="M20.500 1.500C30.500 1.500 39.500 9.500 39.500 20.500 39.500 32 28 37 20.500 47.500 13 37 1.500 32 1.500 20.500 1.500 9.500 10.500 1.500 20.500 1.500z" fill="#27bb8d" stroke="#1f9a74" stroke-width="2"/><path d="M12 12h10v17H12zM10.500 28h13v2h-13z" fill="#111"/><path d="M17.500 14l-3 6h2.200l-1 5 3.300-6h-2z" fill="#27bb8d"/><path d="M22 25h3c1.500 0 2-1 2-2.500V19M27 19c-1.500 0-2.500-1-2.500-2.500V14h6v2.500c0 1.500-1 2.500-3.500 2.500" fill="none" stroke="#111" stroke-width="1.400"/></svg>
<div class="pn lo d-flex flex-column">
<div class="hd"></div>
<div class="srch lt"><svg><use href="#mg"/></svg>Eco</div>
<div class="chps d-flex">
<div class="chp"><svg><use href="#evf"/></svg>EV Chargers</div>
<div class="chp"><svg><use href="#fd"/></svg>Food &amp; Drink</div>
</div>
<div class="lst le">
<div class="rw d-flex"><div class="ric"><svg><use href="#fk"/></svg></div><div><div class="rt"><span class="lt">Eco</span> Foods</div><div class="rs">New York, 11201</div></div><div class="rd">2.5 mi</div></div>
<div class="rw d-flex"><div class="ric"><svg><use href="#ev"/></svg></div><div><div class="rt"><span class="lt">Eco</span> tap</div><div class="rs">New York, 11201</div></div><div class="rd">2.5 mi</div></div>
<div class="rw d-flex"><div class="ric"><svg><use href="#pal"/></svg></div><div><div class="rt"><span class="lt">Eco</span>ol Street</div><div class="rs">New York, 11201</div></div><div class="rd">2.5 mi</div></div>
</div>
</div>
<div class="hb"></div>
</section>

<!-- Phone 6 -->
<section class="ph m6 d-flex flex-column justify-content-end">
<svg class="mp"><use href="#map"/></svg>
<div class="ntc"></div><div class="tm">9:41</div><svg class="stt"><use href="#st"/></svg>
<div class="pn hi d-flex flex-column">
<div class="hd"></div>
<div class="d-flex"><div class="bk d-flex align-items-center"><svg><use href="#bk"/></svg></div><div class="srch flex-grow-1 lt">Eco</div></div>
<div class="chps low d-flex">
<div class="chp"><svg><use href="#evf"/></svg>Chargers</div>
<div class="chp"><svg><use href="#fd"/></svg>Food &amp; Drink</div>
</div>
<div class="lst flex-grow-1 lf">
<div class="rw d-flex"><div class="ric"><svg><use href="#fk"/></svg></div><div><div class="rt"><span class="lt">Eco</span> Foods</div><div class="rs">New York, 11201</div></div><div class="rd">2.5 mi</div></div>
<div class="rw d-flex"><div class="ric"><svg><use href="#ev"/></svg></div><div><div class="rt"><span class="lt">Eco</span> tap</div><div class="rs">New York, 11201</div></div><div class="rd">2.5 mi</div></div>
<div class="rw d-flex"><div class="ric"><svg><use href="#pal"/></svg></div><div><div class="rt"><span class="lt">Eco</span>ol Street</div><div class="rs">New York, 11201</div></div><div class="rd">2.5 mi</div></div>
<div class="rw d-flex"><div class="ric"><svg><use href="#pal"/></svg></div><div><div class="rt">Hotel Inn</div><div class="rs">New York, 11201</div></div><div class="rd">2.5 mi</div></div>
<div class="rw d-flex"><div class="ric"><svg><use href="#pal"/></svg></div><div><div class="rt">51 Hugo Street</div><div class="rs">New York, 11201</div></div><div class="rd">2.5 mi</div></div>
<div class="rw d-flex"><div class="ric"><svg><use href="#pal"/></svg></div><div><div class="rt">51 Hugo Street</div><div class="rs">New York, 11201</div></div><div class="rd">2.5 mi</div></div>
<div class="rw d-flex"><div class="ric"><svg><use href="#pal"/></svg></div><div><div class="rt">51 Hugo Street</div><div class="rs">New York, 11201</div></div><div class="rd">2.5 mi</div></div>
<div class="rw d-flex"><div class="ric"><svg><use href="#pal"/></svg></div><div><div class="rt">51 Hugo Street</div><div class="rs">New York, 11201</div></div><div class="rd">2.5 mi</div></div>
</div>
</div>
<div class="hb"></div>
</section>
</div>

<!-- Flow connectors lying over the phones -->
<svg class="ov" viewBox="0 0 2774 1288" fill="none" stroke-width="2.500">
<g stroke="#f00a0a">
<path d="M232 524V510Q232 498 244 498H2412Q2424 498 2424 510V578M1440 498Q1453 499 1453 512V578"/>
<path d="M224 516l8 9 8-9M2099 467l14 20M2113 467l-14 20"/>
<circle cx="1454" cy="582" r="4" fill="#fff"/><circle cx="2424" cy="582" r="4" fill="#fff"/>
</g>
<g stroke="#2ea1f7">
<path d="M1134 524V490Q1134 478 1146 478H2089M2122 478H2320Q2332 478 2332 490V586Q2332 598 2344 598H2406M1936 478Q1947 479 1947 492V578"/>
<path d="M1126 516l8 9 8-9"/>
<circle cx="1947" cy="582" r="4" fill="#fff"/><circle cx="2410" cy="601" r="4" fill="#fff"/>
</g>
<g stroke="#2bb48c">
<path d="M367 933H423Q436 933 436 920V892Q436 879.500 449 879.500H505M497 871l9 8.500-9 8.500"/>
<path d="M833 1085H876Q894 1085 894 1067V892Q894 879.500 906 879.500H958M950 871l9 8.500-9 8.500"/>
<circle cx="363" cy="933" r="4" fill="#fff"/><circle cx="829" cy="1085" r="4" fill="#fff"/>
</g>
<g stroke="#fff" stroke-width="2">
<path d="M1287 854H1324M1378 854H1420M1411 845l9 9-9 9"/>
<path d="M1766 579H1826Q1838 579 1838 591V732Q1838 744 1850 744H1910M1901 735l9 9-9 9"/>
<path d="M2252 905H2270M2343 905H2384M2375 896l9 9-9 9"/>
</g>
</svg>
<div class="tg t1">Scroll</div>
<div class="tg t2">Drag down</div>
<div class="tg t3">Drag up</div>
</main>
<script src="https://cdn.jsdelivr.net/npm/bootstrap@5.3.0/dist/js/bootstrap.bundle.min.js"></script>
</body>
</html>
